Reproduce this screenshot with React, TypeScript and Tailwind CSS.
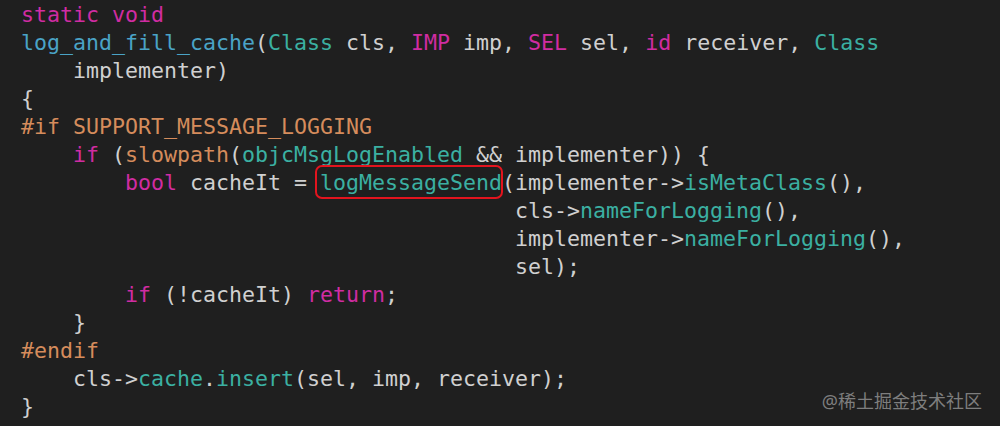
import React from "react";

type Tok = [string, string?];

const K = "text-[#d02ca2]";
const F = "text-[#4aa3c6]";
const T = "text-[#3bb0a2]";
const P = "text-[#d58c5c]";

const lines: Tok[][] = [
  [["static void", K]],
  [
    ["log_and_fill_cache", F],
    ["("],
    ["Class", T],
    [" cls, "],
    ["IMP", K],
    [" imp, "],
    ["SEL", K],
    [" sel, "],
    ["id", K],
    [" receiver, "],
    ["Class", T],
  ],
  [["    implementer)"]],
  [["{"]],
  [["#if SUPPORT_MESSAGE_LOGGING", P]],
  [
    ["    "],
    ["if", K],
    [" ("],
    ["slowpath", P],
    ["("],
    ["objcMsgLogEnabled", T],
    [" && implementer)) {"],
  ],
  [
    ["        "],
    ["bool", K],
    [" cacheIt = "],
    ["logMessageSend", "box"],
    ["(implementer->"],
    ["isMetaClass", T],
    ["(),"],
  ],
  [["                                      cls->"], ["nameForLogging", T], ["(),"]],
  [["                                      implementer->"], ["nameForLogging", T], ["(),"]],
  [["                                      sel);"]],
  [["        "], ["if", K], [" (!cacheIt) "], ["return", K], [";"]],
  [["    }"]],
  [["#endif", P]],
  [["    cls->"], ["cache", T], ["."], ["insert", T], ["(sel, imp, receiver);"]],
  [["}"]],
];

export default function App() {
  return (
    <div className="relative w-[1000px] h-[426px] overflow-hidden bg-[#1f1f1f]">
      <div
        className="pt-px pl-[21px] whitespace-pre text-[21.6px] leading-[28px] text-[#d0d0d0]"
        style={{ fontFamily: '"DejaVu Sans Mono", monospace' }}
      >
        {lines.map((line, i) => (
          <div key={i} className="h-[28px]">
            {line.map(([text, cls], j) =>
              cls === "box" ? (
                <span
                  key={j}
                  className="relative text-[#3bb0a2] after:absolute after:content-[''] after:-left-[5px] after:-right-[1px] after:top-[-5px] after:bottom-[-4px] after:border-2 after:border-[#e3141e] after:rounded-[7px]"
                >
                  {text}
                </span>
              ) : (
                <span key={j} className={cls}>
                  {text}
                </span>
              )
            )}
          </div>
        ))}
      </div>
      <div
        className="absolute right-[18px] bottom-[14px] text-[18px] leading-[22px] text-[#7e7e7e]"
        style={{ fontFamily: '"Noto Sans", "Noto Sans CJK SC", sans-serif' }}
      >
        @稀土掘金技术社区
      </div>
    </div>
  );
}
